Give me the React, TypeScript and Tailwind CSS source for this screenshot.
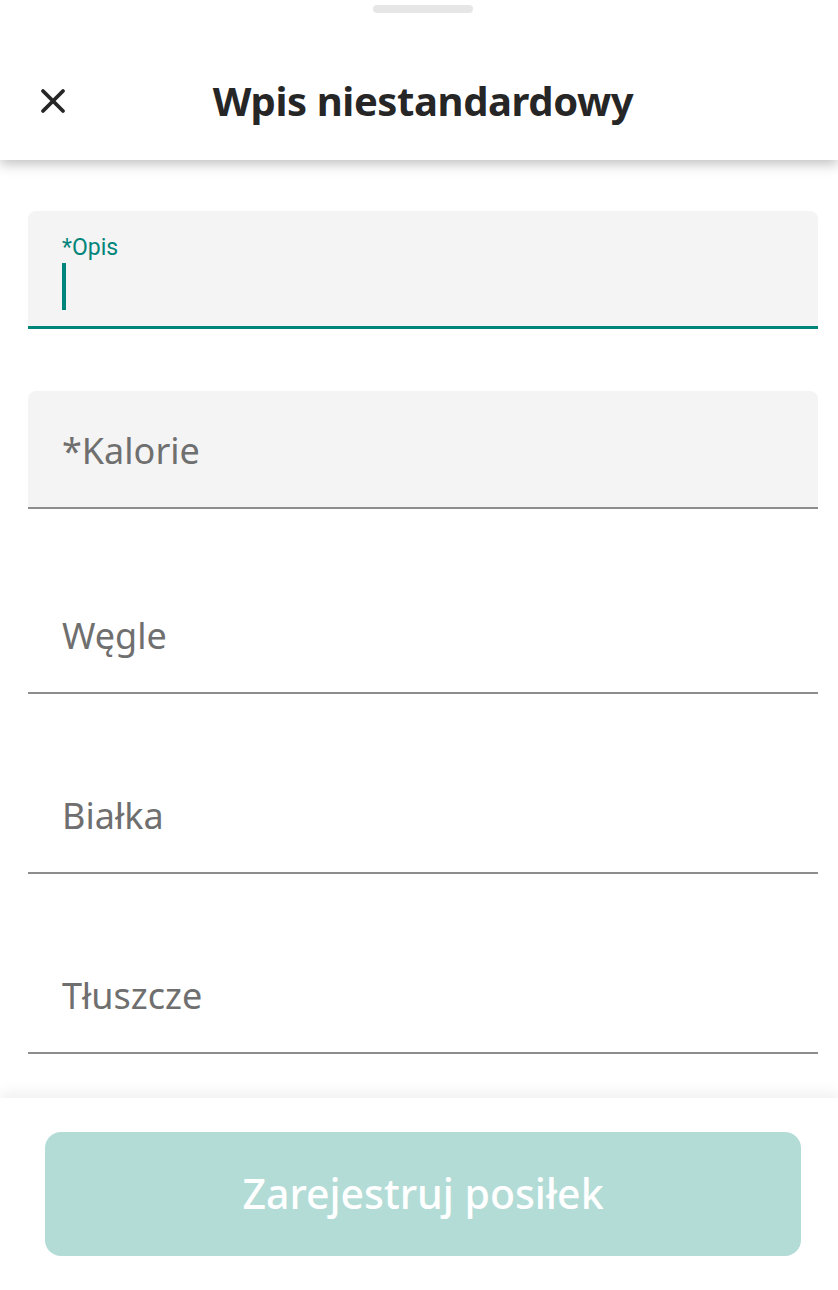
import { X } from "lucide-react";

const FONT = { fontFamily: '"Noto Sans", "Open Sans", sans-serif' };

function Field({ label, filled, extra }: { label: string; filled?: boolean; extra?: string }) {
  return (
    <div
      className={`flex h-[118px] items-center rounded-t-lg border-b-2 border-[#8d8d8d] px-[34px] pt-1 ${
        filled ? "bg-[#f4f4f4]" : ""
      } ${extra ?? ""}`}
    >
      <span className="text-[36px] text-[#6f6f6f]">{label}</span>
    </div>
  );
}

export default function App() {
  return (
    <div className="flex h-screen w-full flex-col overflow-hidden bg-white" style={FONT}>
      <div className="relative z-10 bg-white pl-2 shadow-[0_4px_12px_rgba(0,0,0,0.25)]">
        <div className="flex justify-center pt-[5px]">
          <div className="h-2 w-[100px] rounded-full bg-[#e6e6e6]" />
        </div>
        <div className="relative flex h-[147px] items-center justify-center pt-[28px]">
          <X className="absolute left-[25px] top-[68px]" size={40} strokeWidth={2.3} color="#262626" />
          <h1 className="text-[40px] font-bold tracking-[-0.4px] text-[#262626]">Wpis niestandardowy</h1>
        </div>
      </div>

      <div className="flex flex-1 flex-col gap-[62px] pl-[28px] pr-[20px] pt-[51px]">
        <div className="flex h-[118px] flex-col rounded-t-lg border-b-[3px] border-[#00857a] bg-[#f4f4f4] px-[34px] pt-[22px]">
          <span className="text-[23px] leading-[30px] text-[#00857a]" style={{ fontFamily: "Roboto, sans-serif" }}>
            *Opis
          </span>
          <div className="h-[47px] w-[4px] bg-[#00857a]" />
        </div>
        <Field label="*Kalorie" filled />
        <Field label="Węgle" extra="mt-[5px]" />
        <Field label="Białka" />
        <Field label="Tłuszcze" />
      </div>

      <div className="relative z-10 flex h-[192px] items-start bg-white pl-[45px] pr-[37px] pt-[34px] shadow-[0_-6px_12px_rgba(0,0,0,0.06)]">
        <button className="flex h-[124px] w-full items-center justify-center rounded-2xl bg-[#b3dcd7] text-[41px] font-medium text-white">
          Zarejestruj posiłek
        </button>
      </div>
    </div>
  );
}
